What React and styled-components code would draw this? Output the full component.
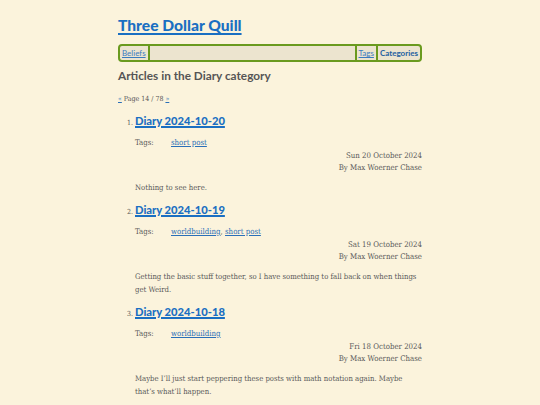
import React from "react";
import styled, { createGlobalStyle } from "styled-components";

const GlobalStyle = createGlobalStyle`
  html, body {
    margin: 0;
    padding: 0;
    background: #fbf3dc;
  }
  body {
    font-family: "DejaVu Serif Condensed", "DejaVu Serif", serif;
    color: #5a5a5a;
  }
`;

const Page = styled.div`
  width: 304px;
  margin: 0 auto;
  padding-top: 14px;
`;

const SiteTitle = styled.a`
  display: block;
  font-family: Lato, "Noto Sans", sans-serif;
  font-weight: 900;
  font-size: 15.6px;
  line-height: 22px;
  color: #1a6fc2;
  text-decoration: underline;
  text-decoration-thickness: 2px;
  text-underline-offset: 2px;
`;

const Nav = styled.nav`
  margin-top: 8px;
  display: flex;
  align-items: stretch;
  height: 14px;
  border: 2px solid #6a9a1f;
  border-radius: 4px;
  background: #ece4cf;
  font-family: Lato, "Noto Sans", sans-serif;
  font-size: 8px;
  line-height: 14px;
`;

const NavItem = styled.a`
  padding: 0 2px;
  color: ${(p) => (p.$current ? "#22609f" : "#3a7cc0")};
  font-weight: ${(p) => (p.$current ? 700 : 400)};
  text-decoration: ${(p) => (p.$current ? "none" : "underline")};
  border-left: ${(p) => (p.$sepLeft ? "2px solid #6a9a1f" : "none")};
  border-right: ${(p) => (p.$sepRight ? "2px solid #6a9a1f" : "none")};
`;

const NavFill = styled.div`
  flex: 1;
`;

const Heading = styled.h2`
  margin: 5px 0 0;
  font-family: Lato, "Noto Sans", sans-serif;
  font-weight: 700;
  font-size: 11.8px;
  line-height: 18px;
  color: #555;
`;

const Pager = styled.div`
  margin-top: 9px;
  font-size: 7px;
  line-height: 10px;
  color: #555;
  a {
    color: #2a6fb8;
    text-decoration: underline;
  }
`;

const List = styled.ol`
  margin: 7px 0 0;
  padding-left: 17px;
  font-size: 7px;
`;

const Item = styled.li`
  margin-bottom: 6px;
  &::marker {
    color: #555;
  }
`;

const Title = styled.a`
  display: inline-block;
  font-family: Lato, "Noto Sans", sans-serif;
  font-weight: 900;
  font-size: 11.2px;
  line-height: 20px;
  color: #1a6fc2;
  text-decoration: underline;
  text-decoration-thickness: 1.5px;
`;

const Meta = styled.div`
  margin: 6px 0 1px;
  display: flex;
  font-size: 7.8px;
  line-height: 12px;
`;

const TagLabel = styled.span`
  width: 36px;
`;

const TagLink = styled.a`
  color: #2a6fb8;
  text-decoration: underline;
`;

const Byline = styled.div`
  text-align: right;
  font-size: 7.8px;
  line-height: 12px;
`;

const Summary = styled.p`
  margin: 7px 0 0;
  font-size: 7.7px;
  line-height: 13px;
`;

const posts = [
  {
    title: "Diary 2024-10-20",
    tags: ["short post"],
    date: "Sun 20 October 2024",
    summary: "Nothing to see here.",
  },
  {
    title: "Diary 2024-10-19",
    tags: ["worldbuilding", "short post"],
    date: "Sat 19 October 2024",
    summary:
      "Getting the basic stuff together, so I have something to fall back on when things get Weird.",
  },
  {
    title: "Diary 2024-10-18",
    tags: ["worldbuilding"],
    date: "Fri 18 October 2024",
    summary:
      "Maybe I\u2019ll just start peppering these posts with math notation again. Maybe that\u2019s what\u2019ll happen.",
  },
];

export default function App() {
  return (
    <>
      <GlobalStyle />
      <Page>
        <SiteTitle href="#">Three Dollar Quill</SiteTitle>
        <Nav>
          <NavItem href="#" $sepRight>Beliefs</NavItem>
          <NavFill />
          <NavItem href="#" $sepLeft $sepRight>Tags</NavItem>
          <NavItem href="#" $current>Categories</NavItem>
        </Nav>
        <Heading>Articles in the Diary category</Heading>
        <Pager>
          <a href="#">«</a> Page 14 / 78 <a href="#">»</a>
        </Pager>
        <List>
          {posts.map((post) => (
            <Item key={post.title}>
              <Title href="#">{post.title}</Title>
              <Meta>
                <TagLabel>Tags:</TagLabel>
                <span>
                  {post.tags.map((t, i) => (
                    <React.Fragment key={t}>
                      {i > 0 && ", "}
                      <TagLink href="#">{t}</TagLink>
                    </React.Fragment>
                  ))}
                </span>
              </Meta>
              <Byline>
                {post.date}
                <br />
                By Max Woerner Chase
              </Byline>
              <Summary>{post.summary}</Summary>
            </Item>
          ))}
        </List>
      </Page>
    </>
  );
}
